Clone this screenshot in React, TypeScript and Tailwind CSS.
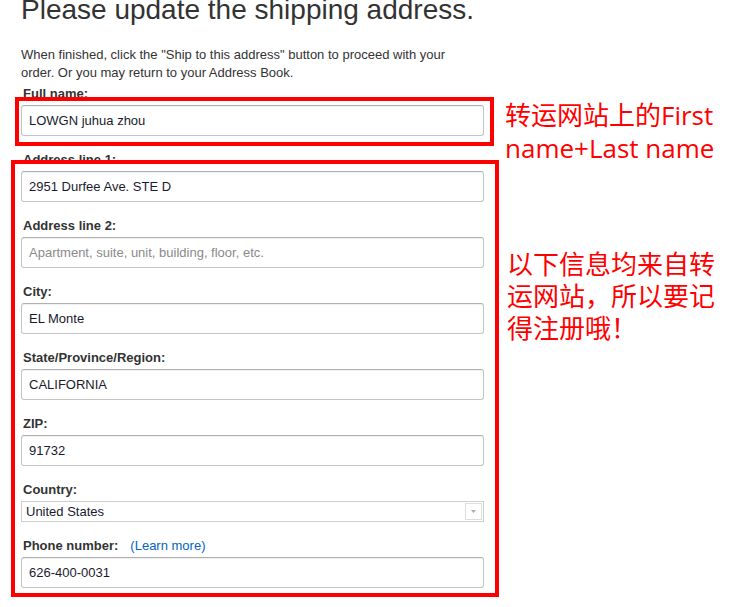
import React from "react";

const Field = ({ label, value, placeholder, extra }: { label: string; value?: string; placeholder?: string; extra?: React.ReactNode }) => (
  <div className="flex flex-col mb-[14px]">
    <div className="pl-[2px] text-[13px] leading-[19px] font-bold text-[#333] mb-[2px]">
      {label}
      {extra}
    </div>
    <div className="w-[463px] h-[31px] border border-[#c4c4c4] border-t-[#b0b0b0] rounded-[3px] shadow-[inset_0_1px_0_rgba(0,0,0,0.06)] bg-white flex items-center pl-[7px] text-[13px]">
      {value ? (
        <span className="text-[#1a1a2e]">{value}</span>
      ) : (
        <span className="text-[#8a8a8a]">{placeholder}</span>
      )}
    </div>
  </div>
);

export default function App() {
  return (
    <div
      className="relative w-[739px] h-[607px] overflow-hidden bg-white flex"
      style={{ fontFamily: '"Liberation Sans", Arial, sans-serif' }}
    >
      <div className="pl-[21px] w-[505px] shrink-0 flex flex-col">
        <h1 className="-mt-[4px] text-[28px] leading-[28px] font-normal text-[#333] whitespace-nowrap">
          Please update the shipping address.
        </h1>
        <p className="mt-[22px] text-[13px] leading-[18px] text-[#333] w-[440px]">
          When finished, click the "Ship to this address" button to proceed with your order. Or you may return to your Address Book.
        </p>
        <div className="mt-[2px] flex flex-col">
          <Field label="Full name:" value="LOWGN juhua zhou" />
          <Field label="Address line 1:" value="2951 Durfee Ave. STE D" />
          <Field label="Address line 2:" placeholder="Apartment, suite, unit, building, floor, etc." />
          <Field label="City:" value="EL Monte" />
          <Field label="State/Province/Region:" value="CALIFORNIA" />
          <Field label="ZIP:" value="91732" />
          <div className="flex flex-col mb-[14px]">
            <div className="pl-[2px] text-[13px] leading-[19px] font-bold text-[#333] mb-[2px]">Country:</div>
            <div className="w-[463px] h-[21px] border border-[#cfcfcf] bg-white flex items-center justify-between pl-[4px] pr-[1px] text-[13px] text-[#1a1a2e]">
              <span>United States</span>
              <span className="w-[17px] h-[17px] border border-[#dedede] flex items-center justify-center">
                <svg width="5" height="3" viewBox="0 0 5 3"><path d="M0 0h5L2.5 3z" fill="#aaa" /></svg>
              </span>
            </div>
          </div>
          <Field
            label="Phone number:"
            value="626-400-0031"
            extra={<span className="ml-[12px] font-normal text-[#0066c0]">(Learn more)</span>}
          />
          <div className="pl-[2px] text-[13px] leading-[19px] font-bold text-[#333] whitespace-nowrap">
            Optional Delivery Preferences:
            <span className="ml-[45px] font-normal text-[#0066c0]">(What's this?)</span>
          </div>
        </div>
      </div>

      <div
        className="flex flex-col text-[#ff0000] text-[26px] leading-[33px]"
        style={{ fontFamily: '"Open Sans", "Noto Sans CJK SC", sans-serif' }}
      >
        <div className="mt-[99px] whitespace-nowrap">
          转运网站上的First
          <br />
          name+Last name
        </div>
        <div className="mt-[83px] pl-[2px] w-[230px] leading-[32px]">
          以下信息均来自转
          <br />
          运网站，所以要记
          <br />
          得注册哦！
        </div>
      </div>

      <div className="pointer-events-none absolute left-[15px] top-[97px] w-[479px] h-[49px] border-[4px] border-[#ff0000]" />
      <div className="pointer-events-none absolute left-[11px] top-[160px] w-[488px] h-[437px] border-[4px] border-[#ff0000]" />
    </div>
  );
}
